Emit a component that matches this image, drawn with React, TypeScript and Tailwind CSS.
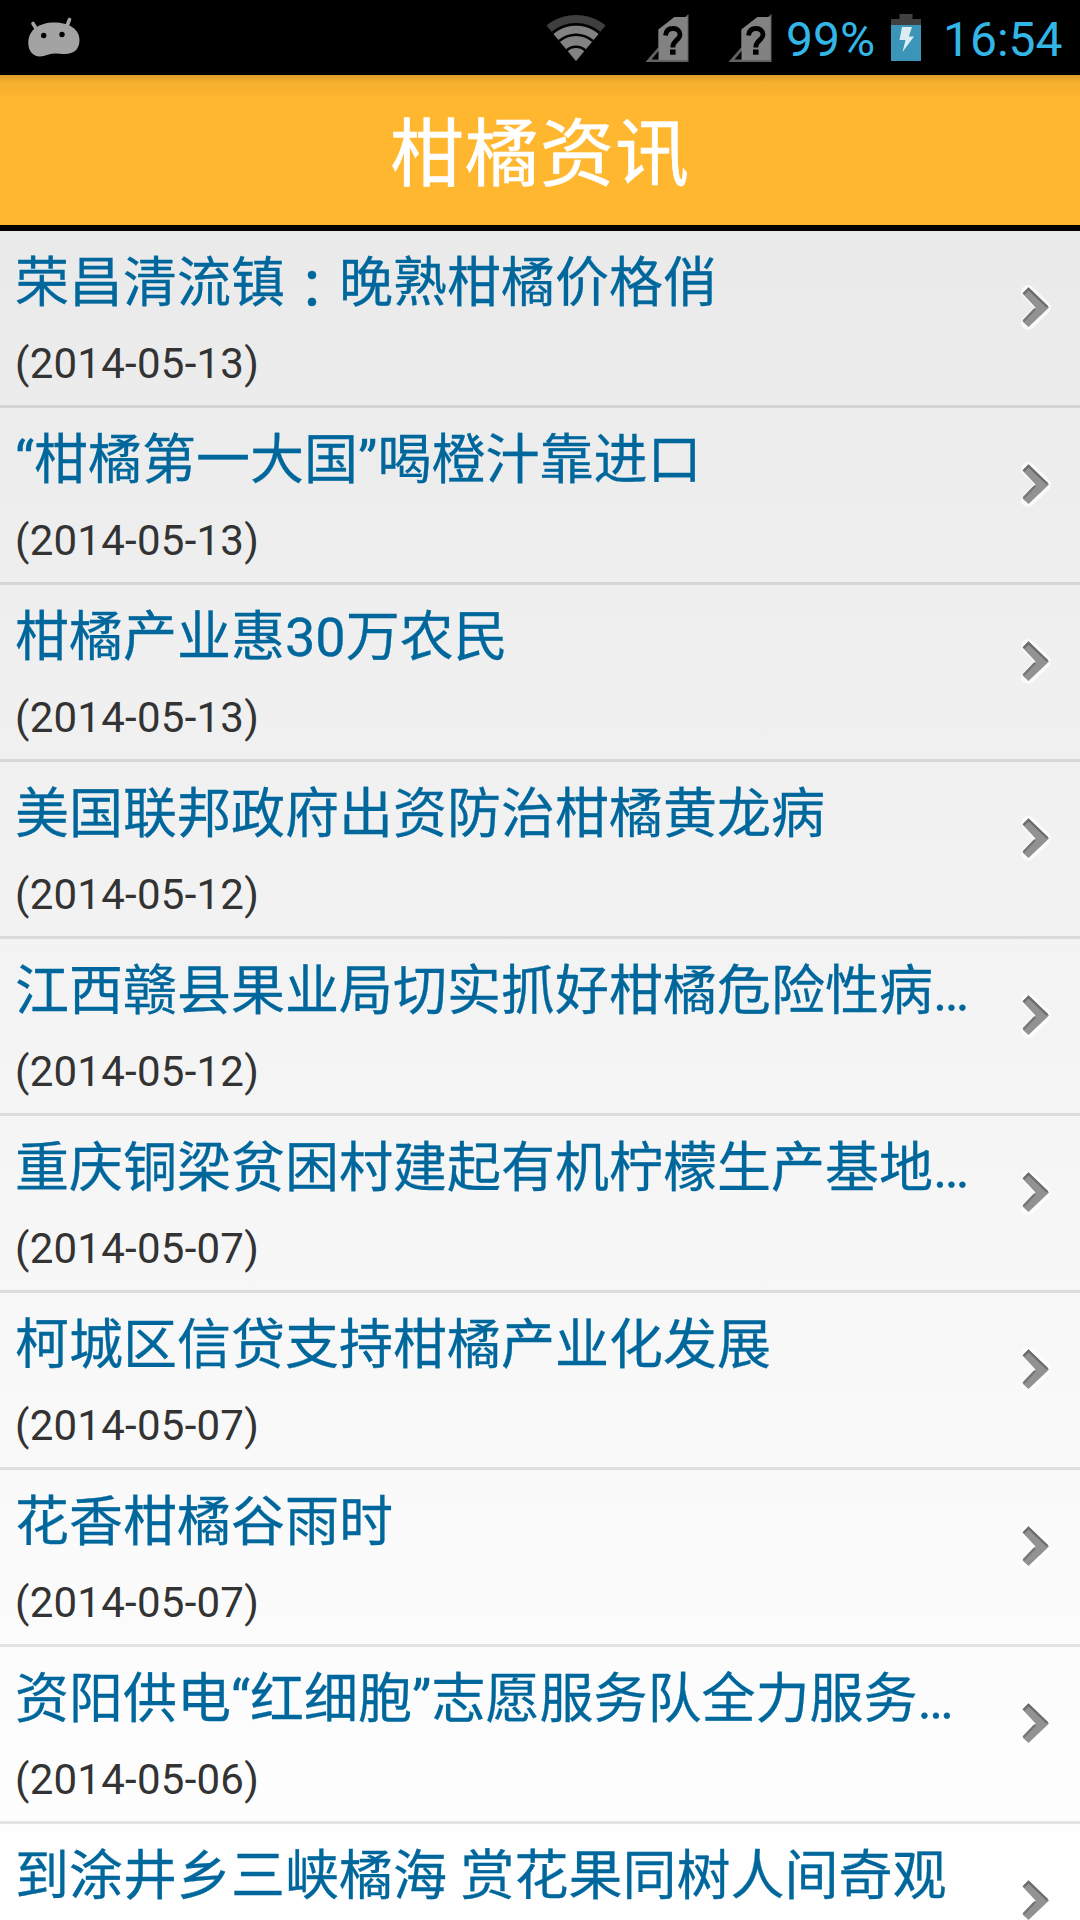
type NewsItem = {
  title: string;
  date?: string;
};

const news: NewsItem[] = [
  { title: "荣昌清流镇：晚熟柑橘价格俏", date: "2014-05-13" },
  { title: "“柑橘第一大国”喝橙汁靠进口", date: "2014-05-13" },
  { title: "柑橘产业惠30万农民", date: "2014-05-13" },
  { title: "美国联邦政府出资防治柑橘黄龙病", date: "2014-05-12" },
  { title: "江西赣县果业局切实抓好柑橘危险性病…", date: "2014-05-12" },
  { title: "重庆铜梁贫困村建起有机柠檬生产基地…", date: "2014-05-07" },
  { title: "柯城区信贷支持柑橘产业化发展", date: "2014-05-07" },
  { title: "花香柑橘谷雨时", date: "2014-05-07" },
  { title: "资阳供电“红细胞”志愿服务队全力服务…", date: "2014-05-06" },
  { title: "到涂井乡三峡橘海 赏花果同树人间奇观" },
];

function AndroidIcon() {
  return (
    <svg width="54" height="42" viewBox="0 0 54 42" className="ml-[27px] mt-[-1px]">
      <g stroke="#a3a3a3" strokeWidth="3.6" strokeLinecap="round">
        <path d="M6 7.500 L10 14" />
        <path d="M42.500 3.500 L40 10" />
      </g>
      <path
        d="M1.300 27 C1.300 14 12 6.500 27 6.500 C42 6.500 52.500 13 52.500 24 C52.500 33 47 38 38 38 C34 38 31 37.500 27 37.500 C22 37.500 18 40.500 13 40.500 C6 40.500 1.300 35 1.300 27 Z"
        fill="#a3a3a3"
      />
      <circle cx="16.700" cy="19.500" r="2.700" />
      <circle cx="35" cy="18.500" r="2.700" />
    </svg>
  );
}

function WifiIcon() {
  return (
    <svg width="60" height="48" viewBox="0 0 60 48">
      <path d="M30 47 L0.500 11.500 C17 -2.500 43 -2.500 59.500 11.500 Z" fill="#3f3f3f" />
      <path d="M30 47 L7.500 20 C21 9 39 9 52.500 20 Z" fill="#828282" />
      <g fill="none" stroke="#000" strokeWidth="2.500">
        <path d="M6.500 18.800 C20 7.500 40 7.500 53.500 18.800" />
        <path d="M13 27 C23 18.500 37 18.500 47 27" />
        <path d="M20.500 36.500 C26 31.500 34 31.500 39.500 36.500" />
      </g>
    </svg>
  );
}

function SimUnknownIcon() {
  return (
    <svg width="44" height="48" viewBox="0 0 44 48">
      <path d="M43.500 0 V48 H0.500 L13.500 33 V15.500 L29.500 3 H40 Z" fill="#626262" />
      <path d="M42.500 3 V46 H13.500 V15.500 L29.500 3 Z" fill="#828282" />
      <path d="M13.500 37 V45.500 H6.500 Z" fill="#000" />
      <path
        d="M20.500 21.500 C21 16.500 24 14.500 28 14.500 C32.500 14.500 35 17 35 20.500 C35 26 27.800 26 27.800 33.500"
        fill="none"
        stroke="#000"
        strokeWidth="4.800"
      />
      <rect x="25" y="35.500" width="5.600" height="5.200" />
    </svg>
  );
}

function BatteryIcon() {
  return (
    <svg width="30" height="48" viewBox="0 0 30 48">
      <path d="M8.500 0 H21.500 V5 H30 V12 H0 V5 H8.500 Z" fill="#404040" />
      <rect y="11" width="30" height="36" fill="#3a95b9" />
      <path d="M11 13 H21 L17.800 22.500 H23 L11.500 38 L14.500 26 H8.500 Z" fill="#dcecf3" />
    </svg>
  );
}

function Chevron() {
  return (
    <svg width="36" height="48" viewBox="0 0 36 48" className="mr-[25px] mt-[52px] shrink-0">
      <path
        d="M9 9 L25 24.500 L9 40"
        fill="none"
        stroke="#fff"
        strokeOpacity=".7"
        strokeWidth="14"
        strokeLinejoin="round"
        strokeLinecap="round"
      />
      <path d="M9.500 4.500 L30 24.500 L9.500 44 L3.500 38.500 L16.500 24.500 L3.500 10.500 Z" fill="#929292" />
      <path d="M4.500 11 L9.500 6 L28.500 24" fill="none" stroke="#6c6c6c" strokeWidth="2.400" />
      <path d="M16 26 L4.500 38" fill="none" stroke="#747474" strokeWidth="2.400" />
    </svg>
  );
}

function StatusBar() {
  return (
    <div className="flex h-[75px] shrink-0 items-center bg-black text-[#33b5e5]">
      <AndroidIcon />
      <div className="ml-auto flex items-center pr-[20px]">
        <WifiIcon />
        <div className="ml-[39px]">
          <SimUnknownIcon />
        </div>
        <div className="ml-[39px] mr-[14px]">
          <SimUnknownIcon />
        </div>
        <span className="w-[88px] whitespace-nowrap pt-[4px] text-[48px] leading-[75px]">99%</span>
        <div className="ml-[17px] mr-[22px]">
          <BatteryIcon />
        </div>
        <span className="w-[117px] whitespace-nowrap pt-[4px] text-[48px] leading-[75px]">
          16:54
        </span>
      </div>
    </div>
  );
}

function Title({ text }: { text: string }) {
  // The full-width colon is centred in its cell only in the traditional face
  const parts = text.split("：");
  return (
    <h2 className="h-[72px] whitespace-pre text-[54px] leading-[72px] text-[#00679c] [-webkit-text-stroke:0.3px_#00679c]">
      {parts[0]}
      {parts.length > 1 && (
        <>
          <span className="inline-block translate-y-[7px] font-['Noto_Sans_CJK_TC',sans-serif] leading-none">
            ：
          </span>
          {parts[1]}
        </>
      )}
    </h2>
  );
}

export default function App() {
  return (
    <div className="flex h-[1920px] w-[1080px] flex-col overflow-hidden bg-white font-['Roboto','Noto_Sans_CJK_SC',sans-serif]">
      <StatusBar />

      <header className="flex h-[156px] shrink-0 flex-col border-b-[6px] border-black bg-[#ffb730]">
        <div className="h-[21px] bg-linear-to-b from-[#dc9d2a] via-[#f7b02e] via-35% to-[#fbb430]" />
        <h1 className="pt-[3px] text-center text-[74px] leading-[112px] tracking-[1px] text-white [-webkit-text-stroke:0.6px_white]">
          柑橘资讯
        </h1>
      </header>

      <ul className="flex-1 overflow-hidden bg-linear-to-b from-[#eaeaea] to-white">
        {news.map((item) => (
          <li
            key={item.title}
            className="flex h-[177px] justify-between border-b-[3px] border-black/10"
          >
            <div className="pl-[15px] pt-[17px]">
              <Title text={item.title} />
              {item.date && (
                <p className="mt-[14px] text-[42px] leading-[60px] tracking-[0.25px] text-[#333]">
                  ({item.date})
                </p>
              )}
            </div>
            <Chevron />
          </li>
        ))}
      </ul>
    </div>
  );
}
